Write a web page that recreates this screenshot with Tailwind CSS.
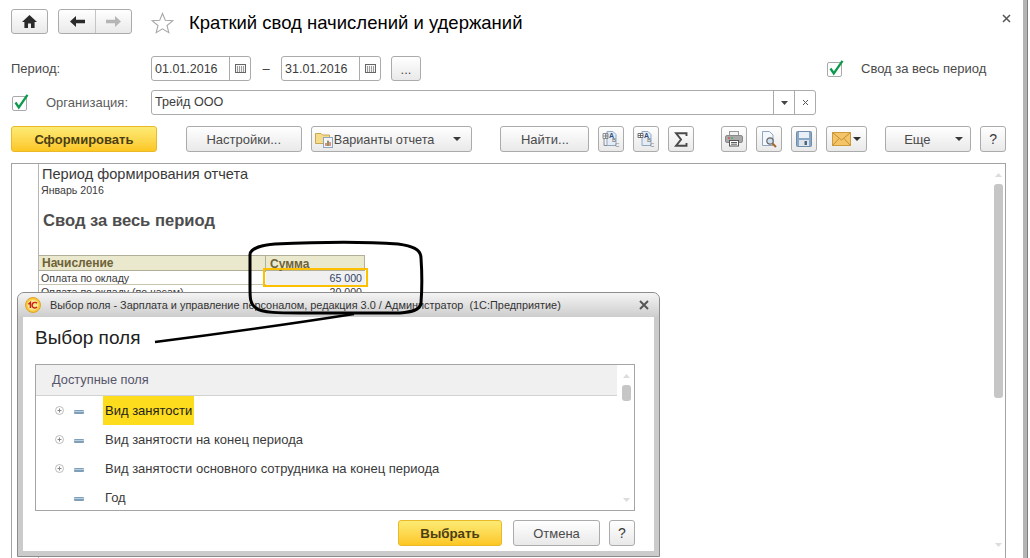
<!DOCTYPE html>
<html lang="ru">
<head>
    <meta charset="UTF-8">
    <title>Краткий свод начислений и удержаний</title>
    <script src="https://cdn.jsdelivr.net/npm/@tailwindcss/browser@4"></script>
</head>
<body class="bg-white">
<div class="relative w-[1030px] h-[558px] overflow-hidden bg-white flex font-['Liberation_Sans',Arial,sans-serif] text-[13px] text-[#4a4a4a]">

    <!-- main form -->
    <div class="w-[1023px] h-full pl-[11px] pr-[17px] flex flex-col">

        <!-- title row -->
        <div class="flex items-center h-[25px] mt-[9px]">
            <button class="w-[37px] h-[25px] rounded-[3px] border border-[#ababab] bg-gradient-to-b from-white to-[#e9e9e9] flex items-center justify-center">
                <svg width="15" height="13" viewBox="0 0 15 13"><path d="M7.5 0 L15 7 H12.6 V13 H9 V8.5 H6 V13 H2.4 V7 H0 Z" fill="#2a2a2a"/></svg>
            </button>
            <div class="ml-[10px] w-[74px] h-[25px] rounded-[3px] border border-[#ababab] bg-gradient-to-b from-white to-[#e9e9e9] flex">
                <div class="w-[37px] border-r border-[#c4c4c4] flex items-center justify-center">
                    <svg width="15" height="11" viewBox="0 0 15 11"><path d="M0 5.5 L6 0 V3.8 H15 V7.2 H6 V11 Z" fill="#2a2a2a"/></svg>
                </div>
                <div class="flex-1 flex items-center justify-center">
                    <svg width="15" height="11" viewBox="0 0 15 11"><path d="M15 5.5 L9 0 V3.8 H0 V7.2 H9 V11 Z" fill="#b5b5b5"/></svg>
                </div>
            </div>
            <svg class="ml-[19px] mt-[2px]" width="23" height="22" viewBox="0 0 23 22"><path d="M11.5 1.5 L14.3 8.3 L21.7 8.8 L16 13.5 L17.8 20.6 L11.5 16.8 L5.2 20.6 L7 13.5 L1.3 8.8 L8.7 8.3 Z" fill="none" stroke="#a8a8a8" stroke-width="1.1"/></svg>
            <div class="ml-[16px] mt-[3px] -translate-x-px text-[18.5px] text-black whitespace-nowrap">Краткий свод начислений и удержаний</div>
            <svg class="ml-auto mr-[-5px] -mt-[7px]" width="9" height="9" viewBox="0 0 9 9"><path d="M1 1 L8 8 M8 1 L1 8" stroke="#555" stroke-width="1.5"/></svg>
        </div>

        <!-- period row -->
        <div class="flex items-center h-[25px] mt-[22px]">
            <div class="w-[140px]">Период:</div>
            <div class="w-[100px] h-[25px] rounded-[3px] border border-[#ababab] flex bg-white">
                <div class="flex-1 pl-[3px] leading-[25px] text-[12.5px] text-[#3c3c3c]">01.01.2016</div>
                <div class="w-[21px] border-l border-[#ababab] flex items-center justify-center">
                    <svg width="11" height="9" viewBox="0 0 11 9"><rect x=".5" y=".5" width="10" height="8" fill="#f4f4f4" stroke="#666"/><path d="M2 3h1M4 3h1M6 3h1M8 3h1M2 5h1M4 5h1M6 5h1M8 5h1M2 7h1M4 7h1M6 7h1M8 7h1" stroke="#444"/></svg>
                </div>
            </div>
            <div class="w-[30px] text-center text-[#3c3c3c]">–</div>
            <div class="w-[100px] h-[25px] rounded-[3px] border border-[#ababab] flex bg-white">
                <div class="flex-1 pl-[3px] leading-[25px] text-[12.5px] text-[#3c3c3c]">31.01.2016</div>
                <div class="w-[21px] border-l border-[#ababab] flex items-center justify-center">
                    <svg width="11" height="9" viewBox="0 0 11 9"><rect x=".5" y=".5" width="10" height="8" fill="#f4f4f4" stroke="#666"/><path d="M2 3h1M4 3h1M6 3h1M8 3h1M2 5h1M4 5h1M6 5h1M8 5h1M2 7h1M4 7h1M6 7h1M8 7h1" stroke="#444"/></svg>
                </div>
            </div>
            <button class="ml-[10px] w-[30px] h-[25px] rounded-[3px] border border-[#ababab] bg-gradient-to-b from-white to-[#e9e9e9] text-[#4a4a4a] leading-[25px]">...</button>
            <svg class="ml-[406px]" width="17" height="17" viewBox="0 0 17 17"><rect x=".5" y="2.5" width="14" height="14" rx="1.5" fill="#fff" stroke="#a9a9a9"/><path d="M3.5 8.5 L6.8 13.5 L15.5 .8" fill="none" stroke="#0c9a4c" stroke-width="2.3"/></svg>
            <div class="ml-[17px] whitespace-nowrap">Свод за весь период</div>
        </div>

        <!-- organization row -->
        <div class="flex items-center h-[25px] mt-[9px]">
            <svg class="ml-[1px]" width="17" height="17" viewBox="0 0 17 17"><rect x=".5" y="2.5" width="14" height="14" rx="1.5" fill="#fff" stroke="#a9a9a9"/><path d="M3.5 8.5 L6.8 13.5 L15.5 .8" fill="none" stroke="#0c9a4c" stroke-width="2.3"/></svg>
            <div class="ml-[17px] w-[105px] text-[#5c5c5c]">Организация:</div>
            <div class="w-[665px] h-[25px] rounded-[3px] border border-[#ababab] flex bg-white">
                <div class="flex-1 pl-[3px] leading-[23px] text-[12.6px] text-[#3c3c3c]">Трейд ООО</div>
                <div class="w-[21px] border-l border-[#ababab] flex items-center justify-center">
                    <svg width="7" height="4" viewBox="0 0 7 4"><path d="M0 0 H7 L3.5 4 Z" fill="#444"/></svg>
                </div>
                <div class="w-[21px] border-l border-[#ababab] flex items-center justify-center">
                    <svg width="7" height="7" viewBox="0 0 7 7"><path d="M1 1 L6 6 M6 1 L1 6" stroke="#555"/></svg>
                </div>
            </div>
        </div>

        <!-- command bar -->
        <div class="flex items-center h-[26px] mt-[11px]">
            <button class="w-[146px] h-[26px] pt-[2px] rounded-[3px] border border-[#eab92a] bg-gradient-to-b from-[#fdeb72] to-[#fcc71f] font-bold text-[#4b3f14]">Сформировать</button>
            <button class="ml-[29px] w-[116px] h-[26px] pt-[2px] rounded-[3px] border border-[#ababab] bg-gradient-to-b from-white to-[#e9e9e9] text-[#4a4a4a]">Настройки...</button>
            <button class="ml-[9px] w-[162px] h-[26px] rounded-[3px] border border-[#ababab] bg-gradient-to-b from-white to-[#e9e9e9] text-[#4a4a4a] flex items-center pl-[3px]">
                <svg width="19" height="18" viewBox="0 0 19 18"><path d="M.5 3.5 H6 L7.5 5 H14.5 V13.5 H.5 Z" fill="#f6dc8a" stroke="#c9a850"/><rect x="8.5" y="7.5" width="9" height="10" fill="#f2f6fb" stroke="#8fa6c0"/><path d="M11 16 V13 M13 16 V10.5 M15 16 V12" stroke="#cf4f3a" stroke-width="1.2"/><path d="M13 16 V11" stroke="#4f9a50" stroke-width="1.2"/></svg>
                <span class="text-[12.7px] mt-[3px]">Варианты отчета</span>
                <svg class="ml-auto mr-[10px]" width="8" height="4" viewBox="0 0 8 4"><path d="M0 0 H8 L4 4 Z" fill="#3a3a3a"/></svg>
            </button>
            <button class="ml-[28px] w-[89px] h-[26px] pt-[2px] rounded-[3px] border border-[#ababab] bg-gradient-to-b from-white to-[#e9e9e9] text-[#4a4a4a]">Найти...</button>
            <button class="ml-[9px] w-[26px] h-[26px] rounded-[3px] border border-[#ababab] bg-gradient-to-b from-white to-[#e9e9e9] flex items-center justify-center">
                <svg width="18" height="18" viewBox="0 0 18 18"><path d="M5 1.5 H11 L14 4.5 V15.5 H5 Z" fill="#e4edf7" stroke="#8fa6c0"/><path d="M1 3.5h5v5h-5z M1 6h5 M3.5 3.5v5 M2 8.5v7h3" fill="none" stroke="#777" stroke-width=".8"/><text x="7" y="7.5" font-size="7" font-weight="700" fill="#2f4f7f">A</text><text x="10" y="12" font-size="6" fill="#666">B</text><text x="13" y="17" font-size="6" fill="#888">C</text></svg>
            </button>
            <button class="ml-[9px] w-[26px] h-[26px] rounded-[3px] border border-[#ababab] bg-gradient-to-b from-white to-[#e9e9e9] flex items-center justify-center">
                <svg width="18" height="18" viewBox="0 0 18 18"><path d="M5 1.5 H11 L14 4.5 V15.5 H5 Z" fill="#e4edf7" stroke="#8fa6c0"/><path d="M1 3.5h5v4h-5z M1 5.5h5 M3.5 3.5v4" fill="#fff" stroke="#555" stroke-width=".8"/><text x="7" y="7.5" font-size="7" font-weight="700" fill="#2f4f7f">A</text><text x="10" y="12" font-size="6" fill="#666">B</text><text x="13" y="17" font-size="6" fill="#888">C</text></svg>
            </button>
            <button class="ml-[9px] w-[26px] h-[26px] rounded-[3px] border border-[#ababab] bg-gradient-to-b from-white to-[#e9e9e9] flex items-center justify-center">
                <svg width="14" height="15" viewBox="0 0 14 15"><path d="M12.5 4 V1.2 H2 L7 7.5 L2 13.8 H12.5 V11" fill="none" stroke="#4a4a4a" stroke-width="1.9" stroke-linejoin="miter"/></svg>
            </button>
            <button class="ml-[27px] w-[26px] h-[26px] rounded-[3px] border border-[#ababab] bg-gradient-to-b from-white to-[#e9e9e9] flex items-center justify-center">
                <svg width="18" height="16" viewBox="0 0 18 16"><rect x="4.5" y=".5" width="9" height="5" fill="#f2f2f2" stroke="#999"/><rect x=".5" y="4.5" width="17" height="7" rx="1.5" fill="#a8a8a8" stroke="#8a8a8a"/><path d="M3 7h2" stroke="#d33"/><path d="M6 7h2" stroke="#3a3"/><rect x="4.5" y="9.5" width="9" height="5.5" fill="#fff" stroke="#555"/><path d="M6 11.5h6M6 13.2h6" stroke="#333" stroke-width=".8"/></svg>
            </button>
            <button class="ml-[9px] w-[26px] h-[26px] rounded-[3px] border border-[#ababab] bg-gradient-to-b from-white to-[#e9e9e9] flex items-center justify-center">
                <svg width="18" height="18" viewBox="0 0 18 18"><path d="M2.5 1.5 H9.5 L13 5 V15.5 H2.5 Z" fill="#f4f8fc" stroke="#8fa6c0"/><circle cx="10" cy="11" r="3.2" fill="#cfe0f0" stroke="#666" stroke-width="1.2"/><path d="M12.5 13.5 L16 17" stroke="#a5682a" stroke-width="2"/></svg>
            </button>
            <button class="ml-[9px] w-[26px] h-[26px] rounded-[3px] border border-[#ababab] bg-gradient-to-b from-white to-[#e9e9e9] flex items-center justify-center">
                <svg width="16" height="16" viewBox="0 0 16 16"><rect x=".5" y=".5" width="15" height="15" rx="1" fill="#8aa8c6" stroke="#6f8dab"/><rect x="3" y="1" width="10" height="6" fill="#e8eff6"/><rect x="3" y="9" width="10" height="6" fill="#dfe5ea"/><rect x="8.5" y="10" width="2.5" height="4" fill="#4d6580"/></svg>
            </button>
            <button class="ml-[9px] w-[41px] h-[26px] rounded-[3px] border border-[#ababab] bg-gradient-to-b from-white to-[#e9e9e9] flex items-center pl-[5px]">
                <svg width="19" height="14" viewBox="0 0 19 14"><rect x=".5" y=".5" width="18" height="13" fill="#f3c468" stroke="#cf9a3c"/><path d="M1 1 L9.5 8 L18 1 M1 13 L7 6.5 M18 13 L12 6.5" fill="none" stroke="#c48f33"/></svg>
                <svg class="ml-[2px]" width="8" height="4" viewBox="0 0 8 4"><path d="M0 0 H8 L4 4 Z" fill="#2f2f2f"/></svg>
            </button>
            <button class="ml-[18px] w-[86px] h-[26px] rounded-[3px] border border-[#ababab] bg-gradient-to-b from-white to-[#e9e9e9] text-[#4a4a4a] flex items-center pl-[18px]">
                <span class="mt-[2px]">Еще</span>
                <svg class="ml-auto mr-[7px]" width="8" height="4" viewBox="0 0 8 4"><path d="M0 0 H8 L4 4 Z" fill="#3a3a3a"/></svg>
            </button>
            <button class="ml-[9px] w-[26px] h-[26px] rounded-[3px] border border-[#ababab] bg-gradient-to-b from-white to-[#e9e9e9] text-[14px] text-[#3a3a3a]">?</button>
        </div>

        <!-- report area -->
        <div class="flex flex-1 mt-[11px] border-l border-t border-r border-[#a3a3a3] min-h-0">
            <div class="w-[27px] border-r border-[#b5b5b5]"></div>
            <div class="flex-1 pl-[2px]">
                <div class="mt-[2px] ml-px text-[14.6px] leading-[17px] text-[#3a3a3a]">Период формирования отчета</div>
                <div class="text-[10.6px] leading-[14px] text-[#3a3a3a]">Январь 2016</div>
                <div class="mt-[15px] ml-[2px] text-[16.6px] leading-[18px] font-bold text-[#4d4d4d]">Свод за весь период</div>
                <div class="mt-[25px] -ml-[2px] w-[326px] text-[10.6px] text-[#3a3a3a]">
                    <div class="grid grid-cols-[227px_99px] h-[16px] bg-[#ebe9cd] border-y border-r border-[#b3ae98]">
                        <div class="pl-[3px] text-[12px] leading-[15px] font-bold text-[#6d6238] border-r border-[#b3ae98]">Начисление</div>
                        <div class="pl-[4px] text-[12px] leading-[16px] font-bold text-[#6d6238]">Сумма</div>
                    </div>
                    <div class="grid grid-cols-[227px_99px] h-[14px] border-b border-[#c9c4b2]">
                        <div class="pl-[2px] leading-[14px]">Оплата по окладу</div>
                        <div class="relative bg-[#f0f0f0] pr-[3px] text-right leading-[14px] text-[#30446b]">
                            65 000
                            <div class="absolute -left-[3px] -right-[3px] -top-[3px] -bottom-[2px] border-2 border-[#fcc000]"></div>
                        </div>
                    </div>
                    <div class="grid grid-cols-[227px_99px] h-[14px]">
                        <div class="pl-[2px] leading-[14px]">Оплата по окладу (по часам)</div>
                        <div class="pr-[3px] text-right leading-[14px]">20 000</div>
                    </div>
                </div>
            </div>
            <!-- report scrollbar -->
            <div class="w-[12px] mr-[1px] flex flex-col items-center">
                <svg class="mt-[9px]" width="7" height="4" viewBox="0 0 7 4"><path d="M0 4 H7 L3.5 0 Z" fill="#dcdcdc"/></svg>
                <div class="mt-[7px] w-[9px] h-[214px] rounded-[3px] bg-[#c6c6c6]"></div>
                <svg class="mt-[145px]" width="7" height="4" viewBox="0 0 7 4"><path d="M0 0 H7 L3.5 4 Z" fill="#dcdcdc"/></svg>
            </div>
        </div>
    </div>

    <!-- window edge at the right -->
    <div class="w-[4px] h-full bg-[#b4b4b4]"></div>
    <div class="w-[1px] h-full bg-[#7f7f7f]"></div>

    <!-- dialog -->
    <div class="absolute left-[17px] top-[292px] w-[643px] h-[265px] rounded-t-[7px] border border-[#8c8c8c] bg-[#cbcbcb] flex flex-col">
        <div class="h-[24px] flex items-center rounded-t-[6px] bg-gradient-to-b from-[#f4f4f4] to-[#cdcdcd] pl-[7px] pr-[10px]">
            <svg width="16" height="16" viewBox="0 0 16 16"><circle cx="8" cy="8" r="7.5" fill="#f7c83a" stroke="#e0a32a"/><circle cx="8" cy="8" r="5.5" fill="#fbe58a"/><path d="M3.4 7.2 L5.4 5.4 V11 M12 6.3 A2.8 2.8 0 1 0 12 10" fill="none" stroke="#c8201f" stroke-width="1.4"/></svg>
            <div class="ml-[9px] text-[10.9px] text-[#333] whitespace-pre">Выбор поля - Зарплата и управление персоналом, редакция 3.0 / Администратор  (1С:Предприятие)</div>
            <svg class="ml-auto" width="10" height="10" viewBox="0 0 10 10"><path d="M1 1 L9 9 M9 1 L1 9" stroke="#555" stroke-width="2"/></svg>
        </div>
        <div class="mx-[5px] h-[234px] bg-white pl-[12px] pr-[19px] flex flex-col">
            <div class="mt-[10px] text-[19px] leading-[22px] text-[#222]">Выбор поля</div>
            <div class="mt-[15px] h-[147px] border border-[#a5a5a5] flex flex-col relative">
                <div class="h-[31px] mr-[17px] bg-[#f0f0f0] border-b border-[#d2d2d2] pl-[16px] leading-[30px] text-[12.8px] text-[#55556a]">Доступные поля</div>
                <div class="flex-1 text-[13px] text-[#3a3a3a]">
                    <div class="flex items-center h-[29px]">
                        <svg class="ml-[19px]" width="9" height="9" viewBox="0 0 9 9"><circle cx="4.5" cy="4.5" r="4" fill="#fff" stroke="#bcbcbc"/><path d="M2.5 4.5h4M4.5 2.5v4" stroke="#888"/></svg>
                        <svg class="ml-[10px] mt-[2px]" width="10" height="4" viewBox="0 0 10 4"><rect width="10" height="4" rx="1" fill="#7f9fb9"/><rect y="1" width="10" height="1" fill="#b9cede"/></svg>
                        <div class="ml-[19px] w-[91px] h-[29px] pl-[2px] bg-[#fcdc1c] leading-[29px] text-[#222] whitespace-nowrap">Вид занятости</div>
                    </div>
                    <div class="flex items-center h-[29px]">
                        <svg class="ml-[19px]" width="9" height="9" viewBox="0 0 9 9"><circle cx="4.5" cy="4.5" r="4" fill="#fff" stroke="#bcbcbc"/><path d="M2.5 4.5h4M4.5 2.5v4" stroke="#888"/></svg>
                        <svg class="ml-[10px] mt-[2px]" width="10" height="4" viewBox="0 0 10 4"><rect width="10" height="4" rx="1" fill="#7f9fb9"/><rect y="1" width="10" height="1" fill="#b9cede"/></svg>
                        <div class="ml-[21px]">Вид занятости на конец периода</div>
                    </div>
                    <div class="flex items-center h-[29px]">
                        <svg class="ml-[19px]" width="9" height="9" viewBox="0 0 9 9"><circle cx="4.5" cy="4.5" r="4" fill="#fff" stroke="#bcbcbc"/><path d="M2.5 4.5h4M4.5 2.5v4" stroke="#888"/></svg>
                        <svg class="ml-[10px] mt-[2px]" width="10" height="4" viewBox="0 0 10 4"><rect width="10" height="4" rx="1" fill="#7f9fb9"/><rect y="1" width="10" height="1" fill="#b9cede"/></svg>
                        <div class="ml-[21px]">Вид занятости основного сотрудника на конец периода</div>
                    </div>
                    <div class="flex items-center h-[29px]">
                        <svg class="ml-[38px] mt-[2px]" width="10" height="4" viewBox="0 0 10 4"><rect width="10" height="4" rx="1" fill="#7f9fb9"/><rect y="1" width="10" height="1" fill="#b9cede"/></svg>
                        <div class="ml-[21px]">Год</div>
                    </div>
                </div>
                <!-- list scrollbar -->
                <svg class="absolute left-[587px] top-[9px]" width="7" height="4" viewBox="0 0 7 4"><path d="M0 4 H7 L3.5 0 Z" fill="#dcdcdc"/></svg>
                <div class="absolute left-[586px] top-[20px] w-[9px] h-[16px] rounded-[3px] bg-[#c6c6c6]"></div>
                <svg class="absolute left-[587px] top-[133px]" width="7" height="4" viewBox="0 0 7 4"><path d="M0 0 H7 L3.5 4 Z" fill="#dcdcdc"/></svg>
            </div>
            <div class="mt-[9px] flex justify-end">
                <button class="w-[104px] h-[26px] pt-[2px] rounded-[3px] border border-[#eab92a] bg-gradient-to-b from-[#fdeb72] to-[#fcc71f] font-bold text-[13.3px] text-[#4b3f14]">Выбрать</button>
                <button class="ml-[11px] w-[87px] h-[26px] pt-[2px] rounded-[3px] border border-[#ababab] bg-gradient-to-b from-white to-[#e9e9e9] text-[#4a4a4a]">Отмена</button>
                <button class="ml-[9px] w-[26px] h-[26px] rounded-[3px] border border-[#ababab] bg-gradient-to-b from-white to-[#e9e9e9] text-[14px] text-[#3a3a3a]">?</button>
            </div>
        </div>
    </div>

    <!-- hand drawn annotation -->
    <svg class="absolute left-0 top-0 pointer-events-none" width="1030" height="558" viewBox="0 0 1030 558">
        <path d="M250 254 C251 249 260 245 275 244 C320 242 370 242 398 244 C412 246 421 249 421 258 C422 272 422 290 421 303 C420 310 412 312 400 313 L300 313 C280 313 262 313 256 308 C250 304 250 298 250 288 L250 254" fill="none" stroke="#000" stroke-width="3"/>
        <path d="M155 342 C210 335 290 324 354 314" fill="none" stroke="#000" stroke-width="2.6"/>
    </svg>
</div>
</body>
</html>
